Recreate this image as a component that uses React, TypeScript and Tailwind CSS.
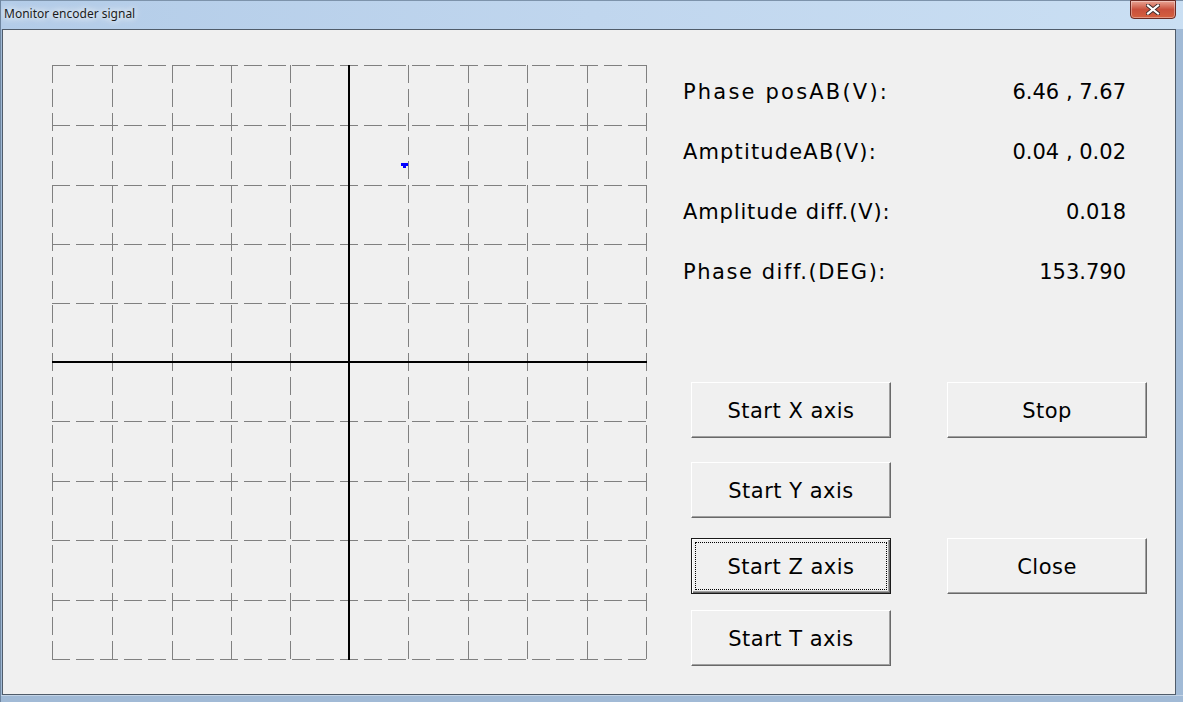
import React from "react";

const GRID = [0, 60, 120, 179, 238, 356, 416, 475, 535, 594];

// per-label tracking: the original bitmap font has very narrow i/l/t/f
const readings = [
  { label: "Phase posAB(V):", value: "6.46 , 7.67", cls: "tracking-[2.2px]" },
  { label: "AmptitudeAB(V):", value: "0.04 , 0.02", cls: "tracking-[1.15px]" },
  { label: "Amplitude diff.(V):", value: "0.018", cls: "tracking-[0.85px]" },
  { label: "Phase diff.(DEG):", value: "153.790", cls: "tracking-[1.55px]" },
];

const Plot = () => (
  <svg width={595} height={595} className="block shrink-0" shapeRendering="crispEdges">
    {GRID.map((v) => (
      <line key={"v" + v} x1={v + 0.5} y1={0} x2={v + 0.5} y2={595} stroke="#808080" strokeDasharray="18 6" />
    ))}
    {GRID.map((v) => (
      <line key={"h" + v} x1={0} y1={v + 0.5} x2={595} y2={v + 0.5} stroke="#808080" strokeDasharray="18 6" />
    ))}
    <line x1={297} y1={0} x2={297} y2={595} stroke="#000" strokeWidth={2} />
    <line x1={0} y1={297} x2={595} y2={297} stroke="#000" strokeWidth={2} />
    {/* signal point */}
    <rect x={349} y={98} width={7} height={3} fill="#0000ff" />
    <rect x={351} y={101} width={3} height={2} fill="#0000ff" />
  </svg>
);

const WinButton = ({ label, focused = false }: { label: string; focused?: boolean }) => (
  <button
    className={
      focused
        ? "relative w-[200px] h-[56px] shrink-0 bg-[#f0f0f0] border border-[#1a1a1a] shadow-[inset_1px_1px_0_#ffffff,inset_-1px_-1px_0_#696969,inset_-2px_-2px_0_#a0a0a0] flex items-center justify-center pt-[3px] text-[21px] tracking-[0.5px] text-black"
        : "relative w-[200px] h-[56px] shrink-0 bg-[#f0f0f0] border-t border-l border-t-white border-l-white border-b border-r border-b-[#696969] border-r-[#696969] shadow-[inset_-1px_-1px_0_#a0a0a0] flex items-center justify-center pt-[3px] text-[21px] tracking-[0.5px] text-black"
    }
  >
    {label}
    {focused && <span className="absolute inset-[3px] border border-dotted border-black pointer-events-none" />}
  </button>
);

export default function App() {
  return (
    <div className="w-[1183px] h-[702px] flex flex-col bg-[#a1bad6] border-l border-[#6f86a0] overflow-hidden font-['DejaVu_Sans',sans-serif]">
      {/* title bar */}
      <div className="h-[29px] shrink-0 flex items-start justify-between bg-linear-to-r from-[#b3cce8] via-[#c0d6ee] to-[#cadff3] border-t border-[#7d93ab]">
        <span className="pl-[3px] pt-[5px] text-[12px] leading-[16px] text-[#1b1b1b] font-['Noto_Sans',sans-serif] [text-shadow:0_0_6px_#ffffff,0_0_10px_#ffffff]">
          Monitor encoder signal
        </span>
        <div className="mr-[7px] w-[46px] h-[19px] -mt-px flex items-center justify-center rounded-b-[4px] border border-[#6b2a22] bg-linear-to-b from-[#e8a494] via-[#c9503c] to-[#d4603f] shadow-[inset_0_0_0_1px_rgba(255,255,255,0.35)]">
          <svg width={14} height={11} viewBox="0 0 14 11">
            <path d="M2 1.5 L12 9.5 M12 1.5 L2 9.5" stroke="#3c2a2a" strokeWidth={4} strokeLinecap="square" />
            <path d="M2 1.5 L12 9.5 M12 1.5 L2 9.5" stroke="#ffffff" strokeWidth={2.2} strokeLinecap="square" />
          </svg>
        </div>
      </div>

      {/* client area */}
      <div className="ml-[1px] w-[1174px] h-[666px] shrink-0 border border-[#505c6a] bg-[#f0f0f0] flex items-start pl-[49px]">
        <div className="mt-[35px]">
          <Plot />
        </div>

        <div className="ml-[36px] mt-[33px] w-[443px] flex flex-col">
          {readings.map((r) => (
            <div key={r.label} className="h-[60px] flex items-center justify-between text-[21px] text-black">
              <span className={r.cls}>{r.label}</span>
              <span>{r.value}</span>
            </div>
          ))}

          <div className="mt-[79px] flex items-start">
            <div className="ml-[8px] flex flex-col">
              <WinButton label="Start X axis" />
              <div className="mt-[24px]">
                <WinButton label="Start Y axis" />
              </div>
              <div className="mt-[20px]">
                <WinButton label="Start Z axis" focused />
              </div>
              <div className="mt-[16px]">
                <WinButton label="Start T axis" />
              </div>
            </div>
            <div className="ml-[56px] flex flex-col">
              <WinButton label="Stop" />
              <div className="mt-[100px]">
                <WinButton label="Close" />
              </div>
            </div>
          </div>
        </div>
      </div>

      {/* bottom frame */}
      <div className="flex-1 border-t border-[#c4d4e6]" />
    </div>
  );
}
